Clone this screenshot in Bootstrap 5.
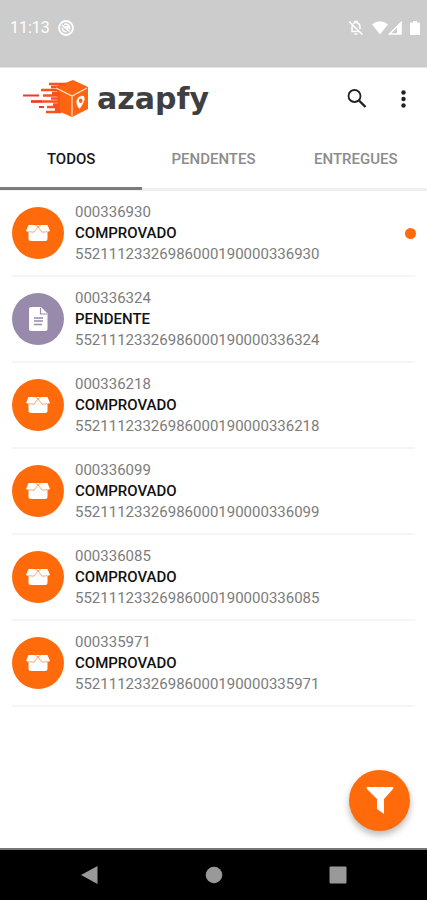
<!DOCTYPE html>
<html lang="pt-BR">
<head>
<meta charset="utf-8">
<meta name="viewport" content="width=device-width, initial-scale=1">
<title>azapfy</title>
<link href="https://cdn.jsdelivr.net/npm/bootstrap@5.3.0/dist/css/bootstrap.min.css" rel="stylesheet">
<style>
  :root { --brand: #ff6b0b; --pending: #978aab; }
  body { font-family: Roboto, sans-serif; background: #fff; color: #111; }
  svg { display: block; }
  .status-bar { background: #ccc; color: #fff; height: 68px; padding: 0 7px 12px 10px; font-size: 16px; border-bottom: 1px solid #e4e4e4; }
  .app-bar { height: 62px; padding: 0 12px 0 22px; }
  .wordmark { font-family: "DejaVu Sans", sans-serif; font-size: 30px; font-weight: 700; line-height: 40px; color: #3f3f41; }
  .app-tabs { border-bottom: 3px solid #efefef; height: 61px; }
  .app-tabs .nav-link { color: #8c8c8c; font-size: 15px; font-weight: 500; line-height: 20px; height: 60px; padding: 0; border-radius: 0; border-bottom: 3px solid transparent; }
  .app-tabs .nav-link.active { color: #161616; border-bottom-color: #7b7b7b; }
  .deliveries { padding: 0 12px; }
  .deliveries .delivery { height: 86px; padding: 11px 0; gap: 11px; border: 0; border-bottom: 2px solid #f5f5f5; border-radius: 0; font-size: 15px; line-height: 21px; color: #7c7c7c; background: none; }
  .delivery strong { font-weight: 500; color: #111; }
  .avatar { width: 52px; height: 52px; background: var(--brand); }
  .avatar.pending { background: var(--pending); }
  .unread { width: 11px; height: 11px; background: var(--brand); margin-right: -1px; }
  .fab { width: 61px; height: 61px; right: 17px; bottom: 69px; background: var(--brand); box-shadow: 0 4px 7px rgba(0,0,0,.28); }
  .system-nav { background: #000; height: 52px; border-top: 2px solid #777; padding: 0 80px; }
</style>
</head>
<body>
<svg class="d-none" aria-hidden="true">
  <symbol id="box" viewBox="0 0 24 18">
    <path fill="#fff" d="M2.500 1H21.500L24 7 21.500 8V14.500Q21.500 17 19 17H5Q2.500 17 2.500 14.500V8L0 7Z"/>
    <path fill="none" stroke="#ff6b0b" stroke-width=".6" d="M2.500 7.700 8 8.200 12 2.800 16 8.200 21.500 7.700M9.500 1.500 12 2.800 14.500 1.500"/>
  </symbol>
</svg>
<div class="d-flex flex-column min-vh-100 position-relative">
  <div class="status-bar d-flex align-items-center justify-content-between">
    <div class="d-flex align-items-center gap-2">
      <span>11:13</span>
      <svg width="16" height="16" viewBox="0 0 16 16" fill="none" stroke="#fff"><circle cx="8" cy="8" r="7" stroke-width="1.800"/><path stroke-width="1.500" d="M4 5 11.500 11.500M6 4.500A4 4 0 0 1 11.500 9.500M4.200 7.500A4 4 0 0 0 8.500 11.800M7 6.500 10 6.800 9.800 9"/></svg>
    </div>
    <div class="d-flex align-items-center">
      <svg class="me-2" width="16" height="16" viewBox="0 0 16 16" fill="none" stroke="#fff"><path stroke-width="1.500" d="M5 3.600Q6 3 7 2.700V1.500H9V2.700Q12 3.500 12 7V9M4.200 5.500Q4 6.500 4 11.500H11.500M6.500 14H9.500M1 1.500 14.500 14.500"/></svg>
      <svg width="16" height="16" viewBox="0 0 17 16"><path fill="#fff" d="M0 4Q8.500-2.600 17 4L8.500 15Z"/></svg>
      <svg width="14" height="16" viewBox="0 0 14 16"><path fill="none" stroke="#fff" stroke-width="1.500" d="M1.500 14 13 2.500V14Z"/><path fill="#fff" d="M9 7 13 3V14H9Z"/></svg>
      <svg class="ms-2" width="10" height="16" viewBox="0 0 10 16"><path fill="#fff" d="M3 1H7V2.500H9Q10 2.500 10 3.500V14Q10 15 9 15H1Q0 15 0 14V3.500Q0 2.500 1 2.500H3Z"/></svg>
    </div>
  </div>

  <header class="app-bar d-flex align-items-center justify-content-between">
    <a href="#" class="d-flex align-items-center text-decoration-none gap-2" aria-label="azapfy">
      <svg width="67" height="40" viewBox="0 0 67 40">
        <path fill="#ff6410" d="M35 7 51 1 66 8V30L50 38 36 32Z"/>
        <path fill="none" stroke="#f9521a" stroke-width="2.400" d="M27 5H44M19 11H38M21 16.500H38M9 22.500H38M25 28H38M24 33H39M29 8H38M30 14H38M29 19.500H38M31 25.500H38M33 30.500H38"/>
        <path fill="none" stroke="#ee3a2c" stroke-width="2.200" d="M1 16.500H17M9 22.500H20M17 28H22"/>
        <path fill="none" stroke="#ffe6d8" stroke-width="1.200" d="M34 9 50 17 65 9M50 17V37"/>
        <path fill="#fff" fill-rule="evenodd" d="M59 17Q63 16 62.500 21 61.500 25 57.500 30 54 26 54.500 22 55.500 18 59 17ZM58.700 19.500A1.800 2.200 0 1 0 58.700 23.900 1.800 2.200 0 1 0 58.700 19.500Z"/>
      </svg>
      <span class="wordmark">azapfy</span>
    </a>
    <div class="d-flex align-items-center">
      <button type="button" class="btn p-1 border-0 me-3" aria-label="Buscar"><svg width="26" height="22" viewBox="0 0 26 22" fill="none" stroke="#222"><circle cx="8.500" cy="8" r="6" stroke-width="1.800"/><path stroke-width="2.400" d="M13 12.500 19.500 19"/></svg></button>
      <button type="button" class="btn p-1 border-0" aria-label="Mais opções"><svg width="15" height="22" viewBox="0 0 15 22" fill="#222"><circle cx="7.500" cy="4.500" r="2.200"/><circle cx="7.500" cy="11" r="2.200"/><circle cx="7.500" cy="17.500" r="2.200"/></svg></button>
    </div>
  </header>

  <nav class="app-tabs nav nav-fill flex-nowrap row g-0">
    <a href="#" class="nav-link active col d-flex align-items-center justify-content-center" aria-current="page">TODOS</a>
    <a href="#" class="nav-link col d-flex align-items-center justify-content-center">PENDENTES</a>
    <a href="#" class="nav-link col d-flex align-items-center justify-content-center">ENTREGUES</a>
  </nav>

  <main class="flex-grow-1">
    <div class="deliveries list-group rounded-0">
      <a href="#" class="delivery list-group-item d-flex align-items-center">
        <span class="avatar rounded-circle d-flex align-items-center justify-content-center flex-shrink-0"><svg width="24" height="18"><use href="#box"/></svg></span>
        <span class="d-flex flex-column flex-grow-1"><span>000336930</span><strong>COMPROVADO</strong><span>55211123326986000190000336930</span></span>
        <span class="unread rounded-circle"></span>
      </a>
      <a href="#" class="delivery list-group-item d-flex align-items-center">
        <span class="avatar pending rounded-circle d-flex align-items-center justify-content-center flex-shrink-0"><svg width="19" height="24" viewBox="0 0 19 24"><path fill="#fff" d="M2 0H12L18.500 6.500V22Q18.500 24 16.500 24H2Q0 24 0 22V2Q0 0 2 0Z"/><path fill="none" stroke="#978aab" stroke-width="1.200" d="M11.500 1V7H18"/><path stroke="#978aab" stroke-width="1.500" d="M5 11H14M5 14H14M5 17.500H13"/></svg></span>
        <span class="d-flex flex-column flex-grow-1"><span>000336324</span><strong>PENDENTE</strong><span>55211123326986000190000336324</span></span>
      </a>
      <a href="#" class="delivery list-group-item d-flex align-items-center">
        <span class="avatar rounded-circle d-flex align-items-center justify-content-center flex-shrink-0"><svg width="24" height="18"><use href="#box"/></svg></span>
        <span class="d-flex flex-column flex-grow-1"><span>000336218</span><strong>COMPROVADO</strong><span>55211123326986000190000336218</span></span>
      </a>
      <a href="#" class="delivery list-group-item d-flex align-items-center">
        <span class="avatar rounded-circle d-flex align-items-center justify-content-center flex-shrink-0"><svg width="24" height="18"><use href="#box"/></svg></span>
        <span class="d-flex flex-column flex-grow-1"><span>000336099</span><strong>COMPROVADO</strong><span>55211123326986000190000336099</span></span>
      </a>
      <a href="#" class="delivery list-group-item d-flex align-items-center">
        <span class="avatar rounded-circle d-flex align-items-center justify-content-center flex-shrink-0"><svg width="24" height="18"><use href="#box"/></svg></span>
        <span class="d-flex flex-column flex-grow-1"><span>000336085</span><strong>COMPROVADO</strong><span>55211123326986000190000336085</span></span>
      </a>
      <a href="#" class="delivery list-group-item d-flex align-items-center">
        <span class="avatar rounded-circle d-flex align-items-center justify-content-center flex-shrink-0"><svg width="24" height="18"><use href="#box"/></svg></span>
        <span class="d-flex flex-column flex-grow-1"><span>000335971</span><strong>COMPROVADO</strong><span>55211123326986000190000335971</span></span>
      </a>
    </div>
  </main>

  <button type="button" class="fab btn rounded-circle border-0 p-0 position-absolute d-flex align-items-center justify-content-center" aria-label="Filtrar"><svg width="28" height="28" viewBox="0 0 28 28"><path fill="#fff" d="M1 0H27Q28 1 27 2L18 12V27L11 22V12L1 2Q0 1 1 0Z"/></svg></button>

  <footer class="system-nav d-flex align-items-center justify-content-between">
    <button type="button" class="btn p-0 border-0" aria-label="Voltar"><svg width="18" height="20" viewBox="0 0 18 20"><path fill="#999" d="M17.500 1V19L1 10Z"/></svg></button>
    <button type="button" class="btn p-0 border-0" aria-label="Início"><svg width="18" height="18" viewBox="0 0 18 18"><circle cx="9" cy="9" r="8.300" fill="#999"/></svg></button>
    <button type="button" class="btn p-0 border-0" aria-label="Recentes"><svg width="18" height="18" viewBox="0 0 18 18"><rect x=".5" y=".5" width="17" height="17" rx="1" fill="#999"/></svg></button>
  </footer>
</div>
</body>
</html>
